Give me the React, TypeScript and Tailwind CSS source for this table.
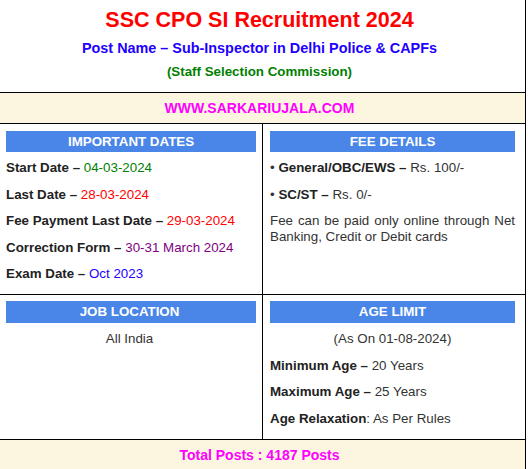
import React from "react";

const Row = ({ label, value, color }: { label: string; value: string; color: string }) => (
  <div className="leading-[16px] mb-[10.5px]">
    <span className="font-bold text-[#222]">{label} – </span>
    <span className={color}>{value}</span>
  </div>
);

const Head = ({ children }: { children: React.ReactNode }) => (
  <div className="h-[21px] bg-[#4a86e8] text-white font-bold text-center leading-[21px]">{children}</div>
);

export default function App() {
  return (
    <div className="w-[528px] h-[469px] overflow-hidden bg-white font-['Liberation_Sans',Arial,sans-serif] text-[13.33px] text-[#333]">
      <div className="w-[526px] border-r border-black">
        <div className="h-[93px] border-b border-black flex flex-col items-center pr-[6px] pt-[7px]">
          <div className="text-[21.5px] leading-[26px] font-bold text-[#ff0000]">SSC CPO SI Recruitment 2024</div>
          <div className="mt-[2.5px] text-[14.4px] leading-[24px] font-bold text-[#2200ff]">Post Name – Sub-Inspector in Delhi Police &amp; CAPFs</div>
          <div className="text-[13.33px] leading-[24px] font-bold text-[#008000]">(Staff Selection Commission)</div>
        </div>
        <div className="h-[31px] border-b border-black bg-[#fcf5e0] flex items-center justify-center pr-[6px] text-[14px] font-bold text-[#ff00ff]">
          WWW.SARKARIUJALA.COM
        </div>
        <div className="flex border-b border-black">
          <div className="w-[263px] border-r border-black pl-[6px] pr-[6px] pt-[7px] pb-[1.5px]">
            <Head>IMPORTANT DATES</Head>
            <div className="mt-[8px]">
              <Row label="Start Date" value="04-03-2024" color="text-[#008000]" />
              <Row label="Last Date" value="28-03-2024" color="text-[#ff0000]" />
              <Row label="Fee Payment Last Date" value="29-03-2024" color="text-[#ff0000]" />
              <Row label="Correction Form" value="30-31 March 2024" color="text-[#800080]" />
              <Row label="Exam Date" value="Oct 2023" color="text-[#2200ff]" />
            </div>
          </div>
          <div className="flex-1 pl-[7px] pr-[10px] pt-[7px]">
            <Head>FEE DETAILS</Head>
            <div className="mt-[8px]">
              <div className="leading-[16px] mb-[10.5px]">
                • <span className="font-bold text-[#222]">General/OBC/EWS – </span>Rs. 100/-
              </div>
              <div className="leading-[16px] mb-[10.5px]">
                • <span className="font-bold text-[#222]">SC/ST – </span>Rs. 0/-
              </div>
              <div className="leading-[16px] text-justify">
                Fee can be paid only online through Net Banking, Credit or Debit cards
              </div>
            </div>
          </div>
        </div>
        <div className="flex border-b border-black">
          <div className="w-[263px] border-r border-black pl-[6px] pr-[6px] pt-[6px]">
            <div className="h-[22px] bg-[#4a86e8] text-white font-bold text-center leading-[22px] pr-[3px]">JOB LOCATION</div>
            <div className="mt-[8px] leading-[16px] text-center pr-[3px]">All India</div>
          </div>
          <div className="flex-1 pl-[7px] pr-[10px] pt-[6px] pb-[2px]">
            <div className="h-[22px] bg-[#4a86e8] text-white font-bold text-center leading-[22px]">AGE LIMIT</div>
            <div className="mt-[8px]">
              <div className="leading-[16px] mb-[10.5px] text-center">(As On 01-08-2024)</div>
              <div className="leading-[16px] mb-[10.5px]">
                <span className="font-bold text-[#222]">Minimum Age – </span>20 Years
              </div>
              <div className="leading-[16px] mb-[10.5px]">
                <span className="font-bold text-[#222]">Maximum Age – </span>25 Years
              </div>
              <div className="leading-[16px] mb-[10.5px]">
                <span className="font-bold text-[#222]">Age Relaxation</span>: As Per Rules
              </div>
            </div>
          </div>
        </div>
        <div className="h-[31px] bg-[#fcf5e0] flex items-center justify-center pr-[6px] text-[14px] font-bold text-[#ff00ff]">
          Total Posts : 4187 Posts
        </div>
      </div>
    </div>
  );
}
